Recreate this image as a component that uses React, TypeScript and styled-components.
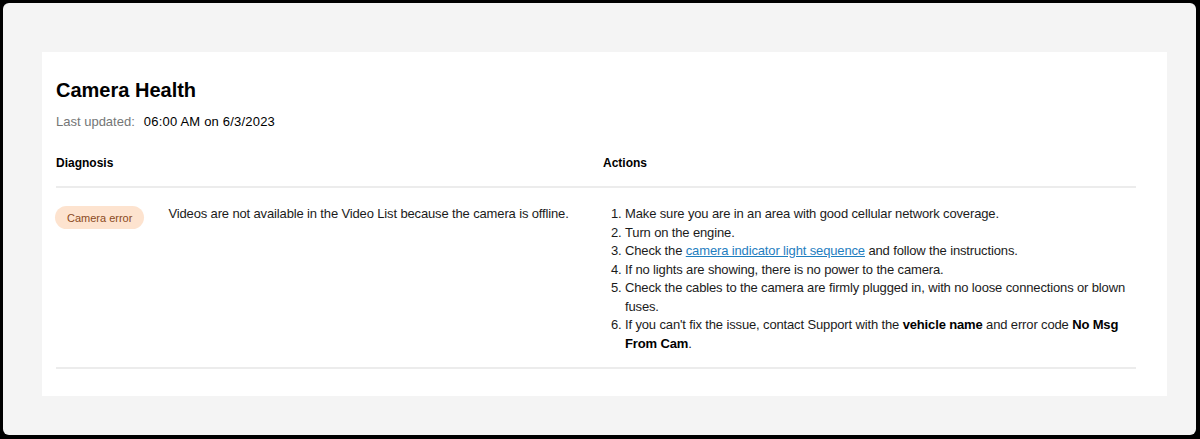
import React from "react";
import styled, { createGlobalStyle } from "styled-components";

const GlobalStyle = createGlobalStyle`
  html, body {
    margin: 0;
    padding: 0;
    background: #000;
  }
  body {
    font-family: "Liberation Sans", Arial, sans-serif;
    color: #1b1b1b;
  }
`;

const Frame = styled.div`
  box-sizing: border-box;
  height: 439px;
  padding: 3px 4px 4px 3px;
  background: #000;
  display: flex;
`;

const Canvas = styled.div`
  flex: 1;
  background: #f4f4f4;
  border-radius: 6px;
  padding: 49px 29px 0 39px;
`;

const Card = styled.section`
  background: #fff;
  padding: 26px 31px 27px 14px;
`;

const Title = styled.h1`
  margin: 0;
  font-size: 20px;
  line-height: 24px;
  font-weight: 700;
  color: #000;
`;

const Updated = styled.div`
  margin-top: 11px;
  display: flex;
  gap: 9px;
  font-size: 13px;
  line-height: 18px;
  color: #000;
  letter-spacing: 0.2px;

  span {
    color: #747676;
    letter-spacing: 0;
  }
`;

const Table = styled.div`
  margin-top: 22px;
`;

const Row = styled.div<{ $head?: boolean }>`
  display: grid;
  grid-template-columns: 547px 1fr;
  padding: ${(p) => (p.$head ? "1px 0 14px" : "17px 0 14px")};
  border-bottom: 2px solid #ececec;
`;

const HeadCell = styled.div`
  font-size: 12px;
  line-height: 18px;
  font-weight: 700;
  color: #000;
`;

const DiagnosisCell = styled.div`
  display: flex;
  align-items: flex-start;
  gap: 24px;
`;

const Badge = styled.span`
  flex: none;
  display: inline-flex;
  align-items: center;
  height: 23px;
  padding: 0 12px;
  border-radius: 12px;
  background: #fde3cf;
  color: #8b4a1d;
  font-size: 11px;
  margin-top: 1px;
  margin-left: -1px;
`;

const Text = styled.p`
  margin: 0;
  font-size: 13px;
  line-height: 18.4px;
  letter-spacing: -0.14px;
  color: #1b1b1b;
`;

const Steps = styled.ol`
  margin: 0;
  padding-left: 22px;
  font-size: 13px;
  line-height: 18.5px;
  letter-spacing: -0.14px;
  color: #1b1b1b;

  b {
    color: #000;
  }
`;

const Link = styled.a`
  color: #1f7ebf;
  text-decoration: underline;
`;

export default function App() {
  return (
    <>
      <GlobalStyle />
      <Frame>
        <Canvas>
          <Card>
            <Title>Camera Health</Title>
            <Updated>
              <span>Last updated:</span>
              06:00 AM on 6/3/2023
            </Updated>
            <Table>
              <Row $head>
                <HeadCell>Diagnosis</HeadCell>
                <HeadCell>Actions</HeadCell>
              </Row>
              <Row>
                <DiagnosisCell>
                  <Badge>Camera error</Badge>
                  <Text>
                    Videos are not available in the Video List because the
                    camera is offline.
                  </Text>
                </DiagnosisCell>
                <Steps>
                  <li>Make sure you are in an area with good cellular network coverage.</li>
                  <li>Turn on the engine.</li>
                  <li>
                    Check the <Link href="#">camera indicator light sequence</Link> and
                    follow the instructions.
                  </li>
                  <li>If no lights are showing, there is no power to the camera.</li>
                  <li>
                    Check the cables to the camera are firmly plugged in, with no loose
                    connections or blown fuses.
                  </li>
                  <li>
                    If you can't fix the issue, contact Support with the{" "}
                    <b>vehicle name</b> and error code <b>No Msg From Cam</b>.
                  </li>
                </Steps>
              </Row>
            </Table>
          </Card>
        </Canvas>
      </Frame>
    </>
  );
}
